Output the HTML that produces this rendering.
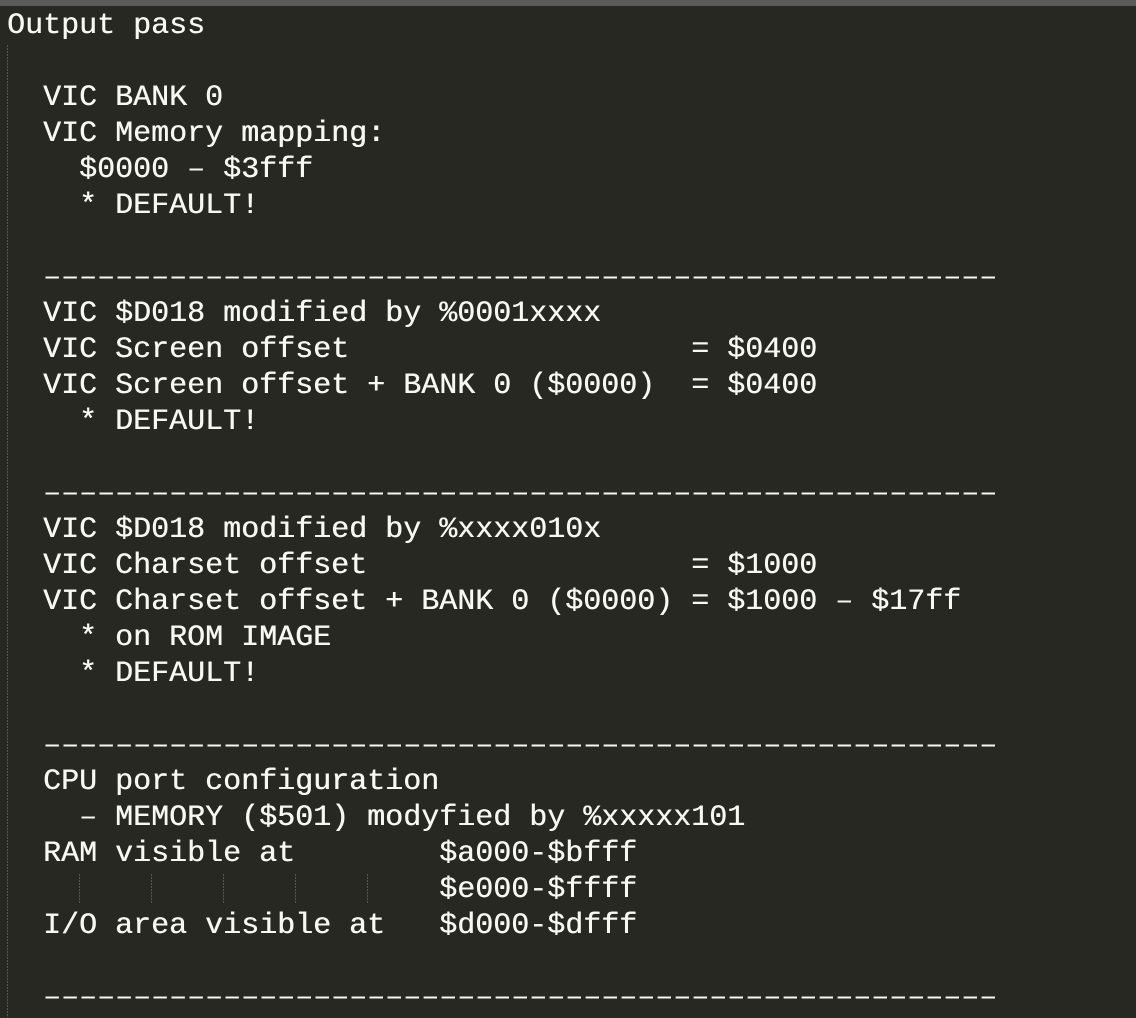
<!DOCTYPE html>
<html><head><meta charset="utf-8"><style>
html,body{margin:0;padding:0;background:#272822;width:1136px;height:1018px;overflow:hidden;position:relative}
.bar{position:absolute;left:0;top:0;width:1136px;height:6px;background:#5b5b59}
pre{position:absolute;left:7px;top:8px;margin:0;font-family:"Liberation Mono",monospace;font-size:30px;line-height:36px;color:#f8f8f2;white-space:pre;text-shadow:0.4px 0 0 #f8f8f2}
.g{position:absolute;width:1px;background:repeating-linear-gradient(#56574f 0 2px,transparent 2px 3px)}
</style></head><body>
<div class="bar"></div>
<div class="g" style="left:7px;top:45px;height:973px"></div>
<div class="g" style="left:79px;top:874px;height:30px"></div>
<div class="g" style="left:151px;top:874px;height:30px"></div>
<div class="g" style="left:223px;top:874px;height:30px"></div>
<div class="g" style="left:295px;top:874px;height:30px"></div>
<div class="g" style="left:367px;top:874px;height:30px"></div>
<pre>Output pass

  VIC BANK 0
  VIC Memory mapping:
    $0000 – $3fff
    * DEFAULT!

  –––––––––––––––––––––––––––––––––––––––––––––––––––––
  VIC $D018 modified by %0001xxxx
  VIC Screen offset                   = $0400
  VIC Screen offset + BANK 0 ($0000)  = $0400
    * DEFAULT!

  –––––––––––––––––––––––––––––––––––––––––––––––––––––
  VIC $D018 modified by %xxxx010x
  VIC Charset offset                  = $1000
  VIC Charset offset + BANK 0 ($0000) = $1000 – $17ff
    * on ROM IMAGE
    * DEFAULT!

  –––––––––––––––––––––––––––––––––––––––––––––––––––––
  CPU port configuration
    – MEMORY ($501) modyfied by %xxxxx101
  RAM visible at        $a000-$bfff
                        $e000-$ffff
  I/O area visible at   $d000-$dfff

  –––––––––––––––––––––––––––––––––––––––––––––––––––––</pre>
</body></html>
